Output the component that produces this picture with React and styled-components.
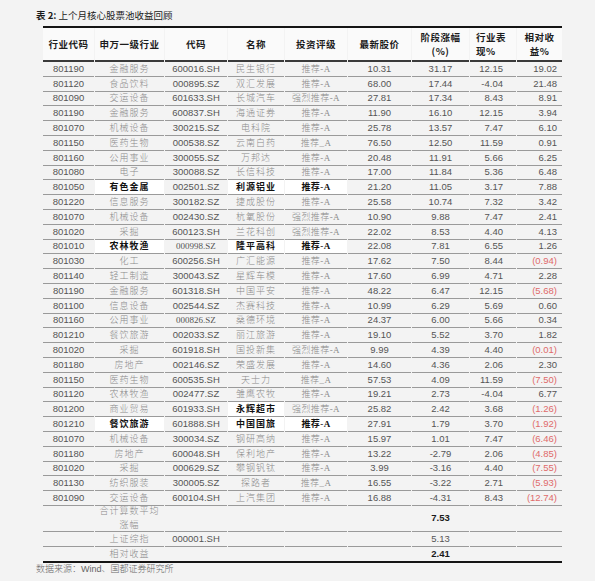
import React from 'react';
import styled, { createGlobalStyle } from 'styled-components';

const GlobalStyle = createGlobalStyle`
  html, body {
    margin: 0;
    padding: 0;
    background: #f3f3f3;
  }
`;

const COLS = '51px 69px 62px 56px 62px 63px 57px 46px 45px';

const rows = [
  ['801190', '金融服务', '600016.SH', '民生银行', '推荐-A', '10.31', '31.17', '12.15', '19.02'],
  ['801120', '食品饮料', '000895.SZ', '双汇发展', '推荐-A', '68.00', '17.44', '-4.04', '21.48'],
  ['801090', '交运设备', '601633.SH', '长城汽车', '强烈推荐-A', '27.81', '17.34', '8.43', '8.91'],
  ['801190', '金融服务', '600837.SH', '海通证券', '推荐-A', '11.90', '16.10', '12.15', '3.94'],
  ['801070', '机械设备', '300215.SZ', '电科院', '推荐-A', '25.78', '13.57', '7.47', '6.10'],
  ['801150', '医药生物', '000538.SZ', '云南白药', '推荐_A', '76.50', '12.50', '11.59', '0.91'],
  ['801160', '公用事业', '300055.SZ', '万邦达', '推荐-A', '20.48', '11.91', '5.66', '6.25'],
  ['801080', '电子', '300088.SZ', '长信科技', '推荐-A', '17.00', '11.84', '5.36', '6.48'],
  ['801050', '有色金属', '002501.SZ', '利源铝业', '推荐-A', '21.20', '11.05', '3.17', '7.88', [1, 3, 4]],
  ['801220', '信息服务', '300182.SZ', '捷成股份', '推荐-A', '25.58', '10.74', '7.32', '3.42'],
  ['801070', '机械设备', '002430.SZ', '杭氧股份', '强烈推荐-A', '10.90', '9.88', '7.47', '2.41'],
  ['801020', '采掘', '600123.SH', '兰花科创', '强烈推荐-A', '22.02', '8.53', '4.40', '4.13'],
  ['801010', '农林牧渔', '000998.SZ', '隆平高科', '推荐-A', '22.08', '7.81', '6.55', '1.26', [1, 3, 4], true],
  ['801030', '化工', '600256.SH', '广汇能源', '推荐-A', '17.62', '7.50', '8.44', '(0.94)'],
  ['801140', '轻工制造', '300043.SZ', '星辉车模', '推荐-A', '17.60', '6.99', '4.71', '2.28'],
  ['801190', '金融服务', '601318.SH', '中国平安', '推荐-A', '48.22', '6.47', '12.15', '(5.68)'],
  ['801100', '信息设备', '002544.SZ', '杰赛科技', '推荐-A', '10.99', '6.29', '5.69', '0.60'],
  ['801160', '公用事业', '000826.SZ', '桑德环境', '推荐-A', '24.37', '6.00', '5.66', '0.34', [], true],
  ['801210', '餐饮旅游', '002033.SZ', '丽江旅游', '推荐-A', '19.10', '5.52', '3.70', '1.82'],
  ['801020', '采掘', '601918.SH', '国投新集', '强烈推荐-A', '9.99', '4.39', '4.40', '(0.01)'],
  ['801180', '房地产', '002146.SZ', '荣盛发展', '推荐-A', '14.60', '4.36', '2.06', '2.30'],
  ['801150', '医药生物', '600535.SH', '天士力', '推荐_A', '57.53', '4.09', '11.59', '(7.50)'],
  ['801120', '农林牧渔', '002477.SZ', '雏鹰农牧', '推荐-A', '19.21', '2.73', '-4.04', '6.77'],
  ['801200', '商业贸易', '601933.SH', '永辉超市', '强烈推荐-A', '25.82', '2.42', '3.68', '(1.26)', [3]],
  ['801210', '餐饮旅游', '601888.SH', '中国国旅', '推荐-A', '27.91', '1.79', '3.70', '(1.92)', [1, 3, 4]],
  ['801070', '机械设备', '300034.SZ', '钢研高纳', '推荐-A', '15.97', '1.01', '7.47', '(6.46)'],
  ['801180', '房地产', '600048.SH', '保利地产', '推荐-A', '13.22', '-2.79', '2.06', '(4.85)'],
  ['801020', '采掘', '000629.SZ', '攀钢钒钛', '推荐-A', '3.99', '-3.16', '4.40', '(7.55)'],
  ['801130', '纺织服装', '300005.SZ', '探路者', '推荐_A', '16.55', '-3.22', '2.71', '(5.93)'],
  ['801090', '交运设备', '600104.SH', '上汽集团', '推荐-A', '16.88', '-4.31', '8.43', '(12.74)'],
];

const Page = styled.div`
  padding: 7px 0 0 36px;
  width: 559px;
`;

const Title = styled.div`
  font-family: "Noto Sans CJK SC", sans-serif;
  font-size: 9.5px;
  line-height: 16px;
  color: #1a1a1a;
  margin-bottom: 3px;
  b { font-weight: 700; }
`;

const Table = styled.div`
  margin-left: 7px;
  width: 519px;
  border-top: 2px solid #141414;
  border-bottom: 2px solid #141414;
`;

const Row = styled.div`
  display: grid;
  grid-template-columns: ${COLS};
  grid-template-rows: ${p => p.$h}px;
  column-gap: 1px;
  height: ${p => p.$h}px;
  overflow: hidden;
`;

const Cell = styled.div`
  display: flex;
  align-items: center;
  justify-content: ${p => p.$align || 'center'};
  padding: ${p => (p.$align === 'flex-end' ? `0 ${p.$pr || 5}px 0 0` : p.$align === 'flex-start' ? '0 0 0 6px' : '0')};
  box-sizing: border-box;
  border-bottom: ${p => (p.$noLine ? 'none' : '1px solid #9a9a9a')};
  background: ${p => (p.$hi ? '#ffffff' : 'transparent')};
  font-size: 9.5px;
  line-height: 12px;
  white-space: nowrap;
  min-width: 0;
`;

const HeadCell = styled(Cell)`
  border-bottom: 2px solid #3a3a3a;
  background: #fafafa;
  font-family: "Noto Sans CJK SC", sans-serif;
  font-weight: 700;
  color: #1c1c1c;
  font-size: 9.5px;
  line-height: 14px;
  letter-spacing: 0.5px;
  text-align: ${p => (p.$align === 'flex-start' ? 'left' : 'center')};
`;

const Num = styled.span`
  font-family: "Liberation Sans", Arial, sans-serif;
  font-size: 9.5px;
  color: ${p => (p.$neg ? '#e06a6a' : p.$bold ? '#1a1a1a' : '#555555')};
  font-weight: ${p => (p.$bold ? 700 : 400)};
`;

const Serif = styled.span`
  font-family: "Liberation Serif", serif;
  color: #555;
  font-size: 9px;
`;

const Zh = styled.span`
  font-family: "Liberation Serif", "Noto Sans CJK SC", serif;
  color: ${p => (p.$bold ? '#111' : '#8a8a8a')};
  font-weight: ${p => (p.$bold ? 700 : 300)};
  font-size: 9px;
  line-height: ${p => p.$lh || 12}px;
  letter-spacing: ${p => (p.$wide ? '1px' : '0.4px')};
  text-align: center;
`;

const Source = styled.div`
  font-family: "Liberation Sans", "Noto Sans CJK SC", sans-serif;
  font-size: 9px;
  color: #666;
  margin-top: 0;
  line-height: 12px;
  span { font-family: "Noto Sans CJK SC", sans-serif; font-weight: 300; }
`;

const headers = [
  ['行业代码'],
  ['申万一级行业'],
  ['代码'],
  ['名称'],
  ['投资评级'],
  ['最新股价'],
  ['阶段涨幅', '(%)'],
  ['行业表', '现%'],
  ['相对收', '益%'],
];

function DataRow({ r }) {
  const hi = r[9] || [];
  const serifCode = r[10];
  return (
    <Row $h={14.8}>
      <Cell><Num>{r[0]}</Num></Cell>
      <Cell $hi={hi.includes(1)}><Zh $bold={hi.includes(1)} $wide>{r[1]}</Zh></Cell>
      <Cell>{serifCode ? <Serif>{r[2]}</Serif> : <Num>{r[2]}</Num>}</Cell>
      <Cell $hi={hi.includes(3)}><Zh $bold={hi.includes(3)} $wide>{r[3]}</Zh></Cell>
      <Cell $hi={hi.includes(4)}><Zh $bold={hi.includes(4)}>{r[4]}</Zh></Cell>
      <Cell><Num>{r[5]}</Num></Cell>
      <Cell><Num>{r[6]}</Num></Cell>
      <Cell $align="flex-end" $pr={13}><Num>{r[7]}</Num></Cell>
      <Cell $align="flex-end"><Num $neg={r[8].startsWith('(')}>{r[8]}</Num></Cell>
    </Row>
  );
}

export default function App() {
  return (
    <Page>
      <GlobalStyle />
      <Title><b>表 2:</b> 上个月核心股票池收益回顾</Title>
      <Table>
        <Row $h={34}>
          {headers.map((h, i) => (
            <HeadCell key={i} $align={i === 7 ? 'flex-start' : undefined}>
              <div>{h.map((l, j) => <div key={j}>{l}</div>)}</div>
            </HeadCell>
          ))}
        </Row>
        {rows.map((r, i) => <DataRow key={i} r={r} />)}
        <Row $h={26}>
          <Cell />
          <Cell><Zh $wide $lh={14}>合计算数平均<br />涨幅</Zh></Cell>
          <Cell /><Cell /><Cell /><Cell />
          <Cell><Num $bold>7.53</Num></Cell>
          <Cell /><Cell />
        </Row>
        <Row $h={15}>
          <Cell />
          <Cell><Zh $wide>上证综指</Zh></Cell>
          <Cell><Num>000001.SH</Num></Cell>
          <Cell /><Cell /><Cell />
          <Cell><Num>5.13</Num></Cell>
          <Cell /><Cell />
        </Row>
        <Row $h={14}>
          <Cell $noLine />
          <Cell $noLine><Zh $wide>相对收益</Zh></Cell>
          <Cell $noLine /><Cell $noLine /><Cell $noLine /><Cell $noLine />
          <Cell $noLine><Num $bold>2.41</Num></Cell>
          <Cell $noLine /><Cell $noLine />
        </Row>
      </Table>
      <Source><span>数据来源：</span>Wind<span>、国都证券研究所</span></Source>
    </Page>
  );
}
